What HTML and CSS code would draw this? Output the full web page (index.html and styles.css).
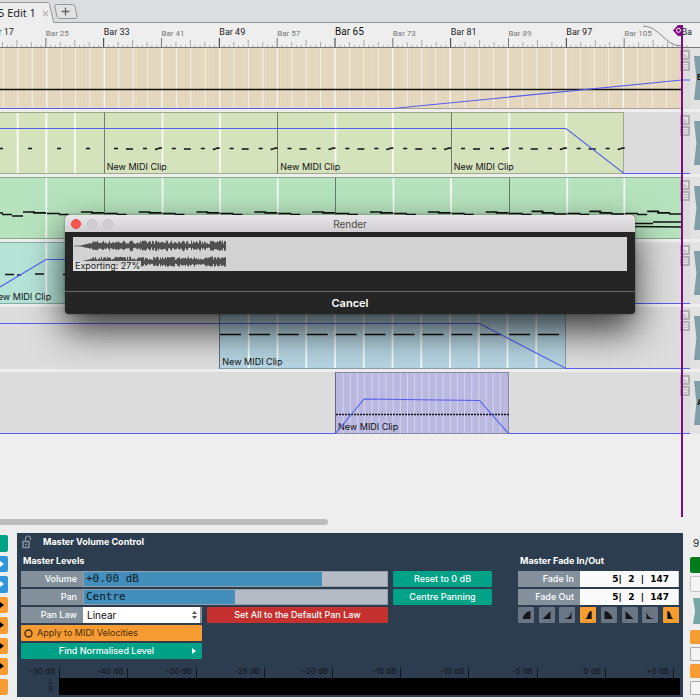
FILE: index.html
```html
<!DOCTYPE html>
<html lang="en">
<head>
<meta charset="utf-8">
<title>Edit 1</title>
<link rel="stylesheet" href="styles.css">
</head>
<body>
<header class="tabs">
  <div class="tab"><span>5 Edit 1</span><button class="tab-close" aria-label="Close tab"><svg width="7" height="7" viewBox="0 0 7 7"><path d="M1 1l5 5M6 1l-5 5" stroke="#b4b4b4" stroke-width="1.2"/></svg></button></div>
  <svg class="tab-edge" width="6" height="20" viewBox="0 0 6 20"><path d="M0 0L5 20H0z" fill="#eeeeee"/><path d="M0 0L5 20" stroke="#959595" fill="none"/></svg>
  <button class="tab-add" aria-label="New tab"><svg width="24" height="15" viewBox="0 0 24 15"><path d="M2.5 .5H18.5Q20.500 .5 21 2.500L23 12Q23.400 14.500 21.500 14.500H5.500Q3.500 14.500 3 12.500L.800 2.500Q.500 .5 2.500 .5z" fill="#e2e2e2" stroke="#959595"/><path d="M7.500 7.500h8M11.500 3.500v8" stroke="#666" stroke-width="1.300"/></svg></button>
</header>

<main class="arrange">
  <div class="ruler">
    <svg class="ticks" id="ticks" viewBox="0 0 690 24" preserveAspectRatio="none"></svg>
    <div class="bars">
      <span>Bar 17</span><span class="weak">Bar 25</span><span>Bar 33</span><span class="weak">Bar 41</span><span>Bar 49</span><span class="weak">Bar 57</span><span class="major">Bar 65</span><span class="weak">Bar 73</span><span>Bar 81</span><span class="weak">Bar 89</span><span>Bar 97</span><span class="weak">Bar 105</span>
    </div>
    <span class="next-bar">Ba</span>
  </div>
  <div class="lanes">
    <section class="lane"><div class="track"><div class="clips"><div class="clip tan c1-13" data-divs="48"></div></div><svg class="notes" viewBox="0 0 690 62" preserveAspectRatio="none"></svg></div><div class="strip"><span>E</span></div></section>
    <section class="lane"><div class="track"><div class="clips"><div class="clip lime c1-3" data-divs="4"></div><div class="clip lime c3-6" data-divs="3"><span>New MIDI Clip</span></div><div class="clip lime c6-9" data-divs="3"><span>New MIDI Clip</span></div><div class="clip lime c9-12" data-divs="3"><span>New MIDI Clip</span></div></div><svg class="notes" viewBox="0 0 690 62" preserveAspectRatio="none"></svg></div><div class="strip"></div></section>
    <section class="lane"><div class="track"><div class="clips"><div class="clip mint c1-3" data-divs="2"></div><div class="clip mint c3-7" data-divs="4"></div><div class="clip mint c7-10" data-divs="3"></div><div class="clip mint c10-13" data-divs="3"></div></div><svg class="notes" viewBox="0 0 690 62" preserveAspectRatio="none"></svg></div><div class="strip"></div></section>
    <section class="lane"><div class="track"><div class="clips"><div class="clip aqua c1-5" data-divs="4"><span>New MIDI Clip</span></div></div><svg class="notes" viewBox="0 0 690 62" preserveAspectRatio="none"></svg></div><div class="strip"></div></section>
    <section class="lane"><div class="track"><div class="clips"><div class="clip sky c5-11" data-divs="12"><span>New MIDI Clip</span></div></div><svg class="notes" viewBox="0 0 690 62" preserveAspectRatio="none"></svg></div><div class="strip"></div></section>
    <section class="lane"><div class="track"><div class="clips"><div class="clip violet c7-10" data-divs="24"><span>New MIDI Clip</span></div></div><svg class="notes" viewBox="0 0 690 62" preserveAspectRatio="none"></svg></div><div class="strip"><span>A</span></div></section>
  </div>
  <div class="playhead"><svg width="10" height="11" viewBox="0 0 10 11"><path d="M10 0H5L0 5.500L5 11H10z" fill="#800a80"/><circle cx="5.500" cy="5.300" r="2" fill="none" stroke="#fff"/></svg></div>
  <div class="scrollbar"><div></div></div>

  <div class="dialog" role="dialog" aria-labelledby="dlg-title">
    <div class="titlebar"><i class="dot red"></i><i class="dot"></i><i class="dot"></i><h1 id="dlg-title">Render</h1></div>
    <div class="dialog-body">
      <div class="progress"><svg id="wave" width="154" height="34" viewBox="0 0 154 34"></svg><span>Exporting: 27%</span></div>
    </div>
    <button class="cancel">Cancel</button>
  </div>
</main>

<footer class="bottom">
  <div class="side left">
    <button class="green" aria-label="Action"></button>
    <button class="blue" aria-label="Menu 1"><svg width="4" height="6"><path d="M0 0l4 3-4 3z" fill="#fff"/></svg></button>
    <button class="blue" aria-label="Menu 2"><svg width="4" height="6"><path d="M0 0l4 3-4 3z" fill="#fff"/></svg></button>
    <button class="orange" aria-label="Menu 3"><svg width="4" height="6"><path d="M0 0l4 3-4 3z"/></svg></button>
    <button class="orange" aria-label="Menu 4"><svg width="4" height="6"><path d="M0 0l4 3-4 3z"/></svg></button>
    <button class="orange" aria-label="Menu 5"><svg width="4" height="6"><path d="M0 0l4 3-4 3z"/></svg></button>
    <button class="orange" aria-label="Menu 6"><svg width="4" height="6"><path d="M0 0l4 3-4 3z"/></svg></button>
    <button class="orange" aria-label="Toggle"></button>
  </div>
  <div class="panel">
    <div class="panel-title"><svg width="10" height="14" viewBox="0 0 10 14"><path d="M3.500 7V3.500Q3.500 1 6 1Q8.500 1 8.500 3.500V5" fill="none" stroke="#8792a0" stroke-width="1.200"/><path d="M1 6.500H7V12.500H1zM3 9.500H5" fill="none" stroke="#8792a0" stroke-width="1.500"/></svg><h2>Master Volume Control</h2></div>
    <div class="controls">
      <div class="levels">
        <h3>Master Levels</h3>
        <div class="row"><label for="vol">Volume</label><div class="slider"><input id="vol" class="range vol" type="range" min="0" max="100" value="78"><output for="vol">+0.00 dB</output></div></div>
        <div class="row"><label for="pan">Pan</label><div class="slider"><input id="pan" class="range pan" type="range" min="0" max="100" value="50"><output for="pan">Centre</output></div></div>
        <div class="halves">
          <div class="row"><label for="law">Pan Law</label><div class="select"><select id="law"><option>Linear</option></select><svg width="5" height="8" viewBox="0 0 5 8"><path d="M2.500 0L5 3H0zM2.500 8L5 5H0z" fill="#555"/></svg></div></div>
          <button class="btn red">Set All to the Default Pan Law</button>
          <button class="btn orange apply"><svg width="9" height="9" viewBox="0 0 9 9"><circle cx="4.500" cy="4.500" r="3.500" fill="none" stroke="#4a2c08" stroke-width="1.400"/></svg>Apply to MIDI Velocities</button>
          <span></span>
          <button class="btn green find"><span>Find Normalised Level</span><svg width="4" height="6"><path d="M0 0l4 3-4 3z" fill="#fff"/></svg></button>
        </div>
      </div>
      <div class="resets"><button class="btn green">Reset to 0 dB</button><button class="btn green">Centre Panning</button></div>
      <div class="fades">
        <h3>Master Fade In/Out</h3>
        <div class="row"><label for="fin">Fade In</label><input class="time" id="fin" type="text" value="5|  2  |  147"></div>
        <div class="row"><label for="fout">Fade Out</label><input class="time" id="fout" type="text" value="5|  2  |  147"></div>
        <div class="curves">
          <button aria-label="Fade in convex"><svg viewBox="0 0 10 10"><path d="M0 10Q2 1 10 0V10z"/></svg></button>
          <button aria-label="Fade in linear"><svg viewBox="0 0 10 10"><path d="M0 10L10 0V10z"/></svg></button>
          <button aria-label="Fade in concave"><svg viewBox="0 0 10 10"><path d="M0 10Q9 9 10 0V10z"/></svg></button>
          <button class="on" aria-label="Fade in S-curve"><svg viewBox="0 0 10 10"><path d="M0 10C5 10 3 0 9 0V10z"/></svg></button>
          <button aria-label="Fade out convex"><svg viewBox="0 0 10 10"><path d="M0 0Q8 1 10 10H0z"/></svg></button>
          <button aria-label="Fade out linear"><svg viewBox="0 0 10 10"><path d="M0 0L10 10H0z"/></svg></button>
          <button aria-label="Fade out concave"><svg viewBox="0 0 10 10"><path d="M0 0Q1 9 10 10H0z"/></svg></button>
          <button class="on" aria-label="Fade out S-curve"><svg viewBox="0 0 10 10"><path d="M1 0C7 0 4 10 10 10H1z"/></svg></button>
        </div>
      </div>
    </div>
    <div class="meter">
      <div class="scale"><span>-50 dB</span><span>-40 dB</span><span>-30 dB</span><span>-25 dB</span><span>-20 dB</span><span>-15 dB</span><span>-10 dB</span><span>-5 dB</span><span>0 dB</span><span>+5 dB</span></div>
      <div class="channels"><div class="lr"><span>L</span><span>R</span></div><div class="bar"></div></div>
    </div>
  </div>
  <div class="side right">
    <span class="nine">9</span>
    <button class="render" aria-label="Enable"></button>
    <button class="plain tall" aria-label="Option 1"></button>
    <div class="plug"></div>
    <button class="orange" aria-label="Option 2"></button>
    <button class="plain" aria-label="Option 3"></button>
    <button class="orange" aria-label="Option 4"></button>
    <button class="plain" aria-label="Option 5"></button>
  </div>
</footer>
<script src="script.js"></script>
</body>
</html>
```
FILE: styles.css
```css
* { box-sizing: border-box; }
body {
  margin: 0;
  min-height: 100vh;
  display: flex;
  flex-direction: column;
  overflow: hidden;
  background: #eeeeee;
  color: #222;
  font: 9px/12px Inter, "Liberation Sans", sans-serif;
}
button, input, select { font: inherit; border: 0; padding: 0; margin: 0; }
h1, h2, h3 { margin: 0; font-size: 9px; font-weight: 700; line-height: 12px; }
svg { display: block; }

/* Tabs */
.tabs {
  display: flex;
  align-items: flex-end;
  height: 23px;
  background: #dcddde;
  border-bottom: 1px solid #959595;
}
.tab {
  display: flex;
  align-items: center;
  height: 21px;
  margin-bottom: -1px;
  background: #eeeeee;
  border-top: 1px solid #959595;
  font: 11px/20px "Open Sans", sans-serif;
  color: #111;
}
.tab span { margin-left: -2px; }
.tab-close { margin: 0 0 0 6px; background: none; }
.tab-edge { margin-bottom: -1px; }
.tab-add { margin: 0 0 3px -1px; background: none; }

/* Arrangement */
.arrange { position: relative; overflow: hidden; flex: 1; }
.ruler {
  position: relative;
  z-index: 1;
  height: 25px;
  background: #eeeeee;
  border-bottom: 1px solid #777;
}
.ticks {
  position: absolute;
  left: 0;
  top: 0;
  width: calc(100% - 10px);
  height: 24px;
}
.bars {
  display: grid;
  grid-template-columns: repeat(12, 1fr);
  margin: 0 18px 0 -12px;
  padding-top: 3px;
  white-space: nowrap;
  font-family: Roboto, sans-serif;
}
.bars .weak { padding-top: 2px; font-size: 8px; color: #777; }
.bars .major { font-size: 10px; line-height: 11px; color: #111; }
.next-bar {
  position: absolute;
  right: 8px;
  top: 3px;
  font-family: Roboto, sans-serif;
}
.lanes { display: flex; flex-direction: column; gap: 3px; margin-top: -1px; }
.lane { display: flex; height: 62px; background: #dcdcdc; }
.track { flex: 1; position: relative; }
.clips {
  display: grid;
  grid-template-columns: repeat(12, 1fr);
  height: 100%;
  margin: 0 8px 0 -12px;
}
.clip {
  position: relative;
  display: flex;
  align-items: flex-end;
  grid-row: 1;
  border: 1px solid rgba(0, 0, 0, .25);
  border-left-color: rgba(0, 0, 0, .45);
  border-right: 0;
}
.clip:last-child { border-right: 1px solid rgba(0, 0, 0, .25); }
.clip span { position: relative; padding-left: 2px; color: #111; }
.clip svg { position: absolute; inset: 0; width: 100%; height: 100%; }
.tan { background: #e3d6bd; }
.lime { background: #d5e3bd; }
.mint { background: #b6e3bd; }
.aqua { background: #b5e3d8; }
.sky { background: #b5d4e1; }
.violet { background: #bab8e0; }
.c1-13 { grid-column: 1 / 13; }
.c1-3 { grid-column: 1 / 3; }
.c3-6 { grid-column: 3 / 6; }
.c6-9 { grid-column: 6 / 9; }
.c9-12 { grid-column: 9 / 12; }
.c3-7 { grid-column: 3 / 7; }
.c7-10 { grid-column: 7 / 10; }
.c10-13 { grid-column: 10 / 13; }
.c1-5 { grid-column: 1 / 5; }
.c5-11 { grid-column: 5 / 11; }
.notes { position: absolute; inset: 0; width: 100%; height: 100%; overflow: visible; }
.strip {
  width: 10px;
  padding: 9px 0 9px 4px;
  background: #e2e2e2;
  overflow: hidden;
}
.strip::before {
  content: "";
  display: block;
  height: 44px;
  background: #7f9ea6;
  clip-path: polygon(0 0, 100% 0, 100% 100%, 0 100%, 40% 50%);
}
.strip span {
  position: relative;
  display: block;
  margin: -29px 0 0 3px;
  color: #111;
  font-weight: 700;
  font-size: 8px;
}
.playhead {
  position: absolute;
  z-index: 2;
  top: 2px;
  right: 17px;
  width: 10px;
  height: 492px;
  border-right: 2px solid #800a80;
}
.scrollbar { margin-top: 85px; padding-right: 372px; }
.scrollbar div { height: 6px; border-radius: 0 3px 3px 0; background: #bdbdbd; }

/* Render dialog */
.dialog {
  position: absolute;
  z-index: 3;
  top: 192px;
  left: 65px;
  right: 65px;
  display: flex;
  flex-direction: column;
  border-radius: 4px;
  background: #252525;
  box-shadow: 0 16px 36px rgba(0, 0, 0, .75), 0 0 3px rgba(0, 0, 0, .4);
}
.titlebar {
  display: flex;
  align-items: center;
  gap: 6px;
  height: 17px;
  padding: 0 6px;
  border-radius: 4px 4px 0 0;
  background: linear-gradient(#e8e6e8, #d0ced0);
}
.titlebar h1 {
  flex: 1;
  padding-right: 48px;
  text-align: center;
  color: #4a4a4a;
  font-size: 10px;
  font-weight: 400;
}
.dot { width: 10px; height: 10px; border: 1px solid #c0bec0; border-radius: 50%; background: #d0ced0; }
.dot.red { background: #fb5550; border-color: #e04843; }
.dialog-body { padding: 5px 8px 20px; border-bottom: 1px solid #6a6a6a; }
.progress { position: relative; height: 34px; background: #d2d2d2; }
.progress span {
  position: absolute;
  left: 0;
  bottom: 0;
  padding: 0 1px 0 2px;
  line-height: 10px;
  background: rgba(225, 225, 225, .88);
  color: #222;
}
.cancel {
  height: 22px;
  background: none;
  color: #fff;
  font-size: 11px;
  font-weight: 600;
}

/* Bottom panel */
.bottom { display: flex; height: 167px; }
.side { display: flex; flex-direction: column; }
.side button { display: flex; align-items: center; width: 100%; }
.left { width: 17px; gap: 4px; padding: 2px 9px 5px 0; }
.left button { flex: 1; border-radius: 0 2px 2px 0; }
.green { background: #00a287; }
.blue { background: #2f97da; }
.orange { background: #f79b33; }
.red { background: #c4312f; }
.panel {
  flex: 1;
  display: flex;
  flex-direction: column;
  margin-bottom: 3px;
  background: #2d3d50;
  color: #fff;
}
.panel-title { display: flex; align-items: center; gap: 11px; padding: 2px 0 0 5px; }
.controls {
  display: grid;
  grid-template-columns: minmax(0, 367fr) minmax(0, 99fr) minmax(0, 182fr);
  column-gap: 5px;
  padding: 6px 4px 0;
}
.controls h3 { padding-left: 2px; margin-bottom: 2px; }
.levels, .fades, .resets { display: flex; flex-direction: column; gap: 2px; }
.resets { padding-top: 16px; }
.fades { margin-left: 21px; }
.row { display: flex; height: 16px; background: #84919d; }
.row label { width: 62px; padding-right: 6px; text-align: right; line-height: 16px; font-weight: 500; }
.slider { position: relative; flex: 1; }
.range { display: block; appearance: none; width: 100%; height: 16px; outline: 1px solid #93a0ac; outline-offset: -1px; }
.range::-webkit-slider-thumb { appearance: none; width: 1px; height: 16px; }
.vol { background: linear-gradient(90deg, #438ebb 78.4%, #b5bbc4 0); }
.pan { background: linear-gradient(90deg, #438ebb 50%, #b5bbc4 0); }
.slider output {
  position: absolute;
  left: 3px;
  top: 0;
  pointer-events: none;
  color: #0c1a24;
  font: 11px/16px "DejaVu Sans Mono", monospace;
}
.halves { display: grid; grid-template-columns: 1fr 1fr; gap: 2px 5px; }
.select { position: relative; flex: 1; display: flex; padding-right: 2px; }
.select select {
  appearance: none;
  width: 100%;
  padding-left: 4px;
  border-radius: 0;
  background: #fff;
  color: #111;
  font-size: 10px;
}
.select svg { position: absolute; right: 5px; top: 4px; }
.btn { height: 16px; border-radius: 1px; color: #fff; font-weight: 500; }
.btn.apply { display: flex; align-items: center; gap: 4px; padding-left: 3px; color: #4a2c08; font-weight: 400; }
.btn.find { display: flex; align-items: center; padding-right: 6px; }
.find span { flex: 1; }
.time {
  flex: 1;
  width: 0;
  padding-right: 9px;
  border-right: 1px solid #ccc;
  background: #fafafa;
  color: #000;
  text-align: right;
  font: bold 9px/16px "DejaVu Sans", sans-serif;
}
.curves { display: flex; justify-content: space-between; }
.curves button {
  display: flex;
  align-items: center;
  justify-content: center;
  width: 16px;
  height: 16px;
  border-radius: 1px;
  background: #6a7684;
}
.curves svg { width: 9px; height: 8px; fill: #14171b; }
.curves .on { background: #f79b33; }
.meter { margin-top: auto; padding: 0 3px 2px 0; color: #10161e; font-size: 8px; }
.scale { display: grid; grid-template-columns: repeat(10, 1fr); margin: 0 6px 0 -25px; }
.scale span {
  height: 10px;
  padding-right: 4px;
  border-right: 1px solid #10161e;
  line-height: 6px;
  text-align: right;
}
.channels { display: flex; height: 17px; }
.lr { width: 42px; padding-right: 6px; display: flex; flex-direction: column; text-align: right; line-height: 8px; font-size: 7px; }
.bar { flex: 1; background: #000; }
.right { width: 17px; padding-left: 7px; gap: 3px; overflow: hidden; }
.right .nine { height: 21px; padding-left: 3px; line-height: 21px; font-size: 10px; }
.right button { height: 14px; border-radius: 2px 0 0 2px; }
.right .render { height: 16px; background: #007a1b; }
.right .plain { background: #f4f4f4; border: 1px solid #aaa; border-right: 0; }
.right .tall { height: 16px; border-color: #c6c6c6; }
.plug { height: 26px; margin: 3px 0 3px 3px; background: #78a5a6; clip-path: polygon(0 0, 100% 0, 100% 100%, 0 100%, 30% 50%); }
```
FILE: script.js
```js
const bar = 694 / 12;
const x0 = -12;

// Ruler ticks and the fade-out curve
let ticks = '';
for (let i = 0; i < 12 * 12 + 2; i++) {
  const x = (x0 + i * bar / 12).toFixed(2);
  const h = i % 12 === 0 ? 9 : i % 6 === 0 ? 7 : i % 3 === 0 ? 5 : 2;
  const c = i % 24 === 0 ? '#333' : i % 12 === 0 ? '#777' : '#aaa';
  ticks += `<path d="M${x} 24v${-h}" stroke="${c}"/>`;
}
ticks += '<path d="M643 3C660 3 664 23 682 23" fill="none" stroke="#888"/>';
document.getElementById('ticks').innerHTML = ticks;

// Beat lines inside the clips
document.querySelectorAll('.clip').forEach(clip => {
  const n = +clip.dataset.divs;
  const fine = n > 12;
  let s = '';
  for (let i = 1; i < n; i++) {
    const strong = !fine || (n === 48 && i % 4 === 0);
    s += `<path d="M${i} 0V1" vector-effect="non-scaling-stroke" stroke="#fff" stroke-width="${strong ? (n === 48 ? 1.3 : 1.8) : 1}" stroke-opacity="${strong ? .85 : n === 48 ? .6 : .4}"/>`;
  }
  if (n === 48) {
    for (let i = 0; i < n * 4; i++) {
      s += `<path d="M${i / 4} 0V1" vector-effect="non-scaling-stroke" stroke="#fff" stroke-opacity=".1"/>`;
    }
  }
  clip.insertAdjacentHTML('afterbegin', `<svg viewBox="0 0 ${n} 1" preserveAspectRatio="none">${s}</svg>`);
});

// Notes, as [x1, y1, x2, y2] within each lane
const notes = [[], [], [], [], [], []];
notes[0].push([0, 42.5, 682, 42.5]);
for (let i = 0; i < 4; i++) notes[1].push([i * 29 - 1, 36.5, i * 29 + 3, 36.5]);
for (let i = 0; i < 9; i++) {
  const x = 104 + i * bar;
  notes[1].push([x + 10, 36.5, x + 14, 36.5], [x + 22, 37, x + 29, 37],
    [x + 39, 36.5, x + 43, 36.5], [x + 51, 37.3, x + 54, 37], [x + 54, 36.3, x + 58, 36]);
}
notes[2].push([0, 36, 3, 36], [2, 37.5, 12, 37.5], [12, 39, 23, 39]);
for (let i = 0; i < 12; i++) {
  const x = -12 + i * bar;
  const late = i > 8;
  const a = late ? 23 : 35;
  if (i) notes[2].push([x + 1, 36.5, x + 14, 36.5], [x + 13, 37.5, x + 23, 37.5]);
  notes[2].push([x + a, late ? 34.3 : 35, x + a + 12, late ? 34.3 : 35]);
  notes[2].push([x + a + 10, 35.8, x + (late ? 46 : 58), 35.8]);
  if (late) notes[2].push([x + 45, 37, x + 58, 37]);
}
notes[2].push([630, 46.5, 653, 46.5], [653, 45, 682, 45], [630, 49.5, 682, 50]);
notes[3].push([5, 32.5, 14, 32.5], [17, 33, 21, 33], [35, 32, 44, 32], [63, 32.5, 72, 32.5]);
for (let i = 0; i < 12; i++) notes[4].push([220 + i * bar / 2, 27.5, 241 + i * bar / 2, 27.5]);
for (let x = 336; x < 508; x += 3) notes[5].push([x, 42.5, x + 2, 42.5]);

const curves = [
  'M0 61.500H393L682 33H690',
  'M0 16.500H566L624 61.500H690',
  '',
  'M0 45L46 17.500H600V61.500H690',
  'M0 16.500H479.500L566 61.500H690',
  'M0 61.500H335.500L364 27L479.500 28.500L508.500 61.500H690'
];
const toggles = '<g transform="translate(680 3)"><path d="M1 1H9V9H1zM1 12H9V20H1z" fill="#e4e4e4" stroke="#b0b0b0" stroke-width="2"/><path d="M4 7V4L7 7zM4 14.500h3v3H4z" fill="#f4f4f4" stroke="#aaa" stroke-width=".8"/></g>';
document.querySelectorAll('.notes').forEach((svg, i) => {
  svg.innerHTML = toggles +
    `<path d="${notes[i].map(n => `M${n[0]} ${n[1]}L${n[2]} ${n[3]}`).join('')}" stroke="#111" stroke-width="1.700" fill="none"/>` +
    `<path d="${curves[i]}" stroke="#525eee" stroke-width="1.100" fill="none"/>`;
});

// Rendered part of the waveform
let seed = 7;
const rnd = () => (seed = (seed * 16807) % 2147483647) / 2147483647;
let wave = '';
for (const mid of [9, 25]) {
  for (let x = 1; x < 153; x++) {
    const env = x < 7 ? .4 : x < 18 ? .5 + (x - 7) * .25 : 2 + rnd() * 3.5;
    wave += `M${x + .5} ${(mid - env).toFixed(1)}V${(mid + env * (.75 + rnd() * .25)).toFixed(1)}`;
  }
}
document.getElementById('wave').innerHTML = `<path d="${wave}" stroke="#505050"/>`;
```
